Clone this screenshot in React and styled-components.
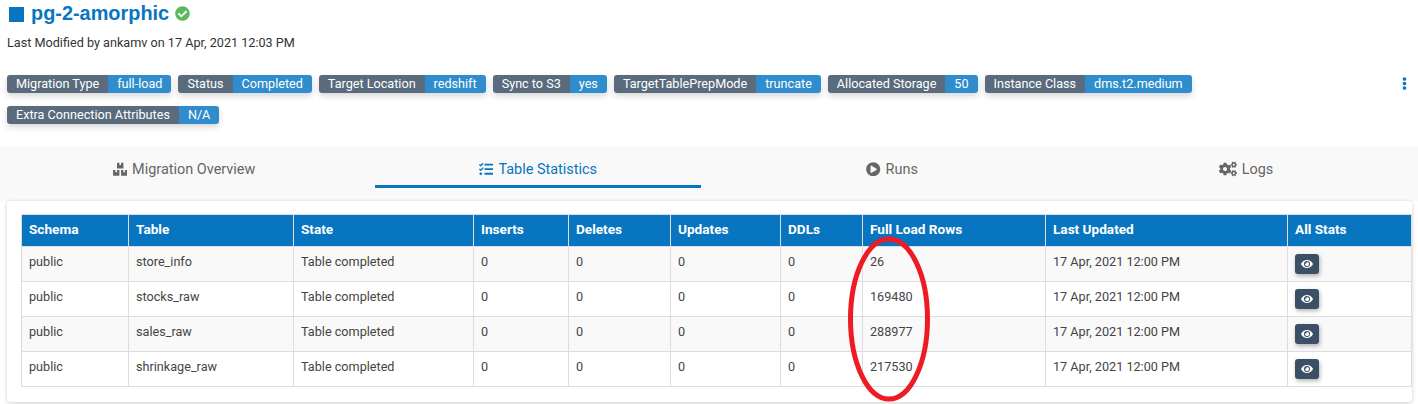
import React from 'react'
import styled, { createGlobalStyle } from 'styled-components'
import { FaBoxes, FaCheckCircle, FaCogs, FaEllipsisV, FaEye, FaPlayCircle, FaTasks } from 'react-icons/fa'

const GlobalStyle = createGlobalStyle`
  html, body {
    margin: 0;
    background: #fff;
    font-family: Roboto, "Liberation Sans", sans-serif;
  }
`

const Page = styled.div`
  position: relative;
  width: 1418px;
  height: 404px;
  overflow: hidden;
  background: #fff;
`

const Header = styled.header`
  height: 146px;
  padding: 0 7px;
  box-sizing: border-box;
`

const TitleRow = styled.div`
  display: flex;
  align-items: center;
  height: 27px;
  color: #0875c1;
`

const TitleMark = styled.span`
  width: 15px;
  height: 15px;
  margin: 1px 0 0 2px;
  background: #0875c1;
`

const Title = styled.h1`
  margin: 0 6px 0 7px;
  font: bold 19.9px/27px "Liberation Sans", Arial, sans-serif;
`

const Modified = styled.p`
  margin: 8px 0 0;
  height: 16px;
  font-size: 12.65px;
  line-height: 16px;
  color: #333;
`

const BadgeWrap = styled.div`
  position: relative;
  display: flex;
  flex-wrap: wrap;
  gap: 13px 7px;
  margin-top: 24px;
  padding-right: 60px;
`

const Badge = styled.span`
  display: inline-flex;
  height: 18px;
  border-radius: 3px;
  overflow: hidden;
  font-size: 12.64px;
  line-height: 18px;
  color: #fff;
  box-shadow: 0 3px 6px rgba(0, 0, 0, 0.16);
`

const BadgeKey = styled.span`
  padding: 0 9px;
  background: #5a6b7d;
`

const BadgeValue = styled.span`
  padding: 0 9px;
  background: #2f8ccd;
`

const Kebab = styled.span`
  position: absolute;
  top: 2px;
  right: 0;
  color: #0875c1;
  font-size: 13px;
`

const Tabs = styled.nav`
  display: flex;
  gap: 28px;
  height: 55px;
  padding-left: 21px;
  background: #f9f9f9;
`

const Tab = styled.div`
  display: flex;
  align-items: center;
  justify-content: center;
  gap: 5px;
  width: 326px;
  height: 42px;
  box-sizing: border-box;
  padding-top: 7px;
  font-size: 14.45px;
  color: ${p => (p.$active ? '#0875c1' : '#666')};
  border-bottom: 3px solid ${p => (p.$active ? '#0875c1' : 'transparent')};
`

const Card = styled.section`
  margin: 0 6px 0 7px;
  height: 201px;
  padding: 14px 0 0 15px;
  box-sizing: border-box;
  border-radius: 4px;
  background: #fff;
  box-shadow: 0 1px 4px rgba(0, 0, 0, 0.2);
`

const Table = styled.table`
  width: 1391px;
  margin: -1px 0 0 -1px;
  table-layout: fixed;
  border-collapse: collapse;
  font-size: 12.65px;
`

const Th = styled.th`
  height: 32px;
  padding: 0 7px 4px;
  box-sizing: border-box;
  border: 1px solid #ddd;
  background: #0875c1;
  color: #fff;
  font-size: 13.6px;
  font-weight: 700;
  text-align: left;
`

const Row = styled.tr`
  background: ${p => (p.$odd ? '#f9f9f9' : '#fff')};
`

const Td = styled.td`
  height: 35px;
  padding: 0 7px 5px;
  box-sizing: border-box;
  border: 1px solid #ddd;
  color: #444;
`

const ViewButton = styled.button`
  display: flex;
  align-items: center;
  justify-content: center;
  width: 24px;
  height: 20px;
  margin: 5px 0 0;
  padding: 0;
  border: 0;
  border-radius: 3px;
  background: #3b4f66;
  color: #fff;
  font-size: 12px;
  box-shadow: 1px 2px 4px rgba(0, 0, 0, 0.3);
`

const Ring = styled.svg`
  position: absolute;
  left: 845px;
  top: 234px;
`

const badges = [
  ['Migration Type', 'full-load'],
  ['Status', 'Completed'],
  ['Target Location', 'redshift'],
  ['Sync to S3', 'yes'],
  ['TargetTablePrepMode', 'truncate'],
  ['Allocated Storage', '50'],
  ['Instance Class', 'dms.t2.medium'],
  ['Extra Connection Attributes', 'N/A'],
]

const columns = [
  ['Schema', 107],
  ['Table', 165],
  ['State', 180],
  ['Inserts', 95],
  ['Deletes', 102],
  ['Updates', 110],
  ['DDLs', 82],
  ['Full Load Rows', 183],
  ['Last Updated', 242],
  ['All Stats', 124],
]

const rows = [
  ['store_info', '26'],
  ['stocks_raw', '169480'],
  ['sales_raw', '288977'],
  ['shrinkage_raw', '217530'],
]

const App = () => {
  return (
    <Page>
      <GlobalStyle />
      <Header>
        <TitleRow>
          <TitleMark />
          <Title>pg-2-amorphic</Title>
          <FaCheckCircle size={15} color="#5cb85c" />
        </TitleRow>
        <Modified>Last Modified by ankamv on 17 Apr, 2021 12:03 PM</Modified>
        <BadgeWrap>
          {badges.map(([k, v]) => (
            <Badge key={k}>
              <BadgeKey>{k}</BadgeKey>
              <BadgeValue>{v}</BadgeValue>
            </Badge>
          ))}
          <Kebab>
            <FaEllipsisV />
          </Kebab>
        </BadgeWrap>
      </Header>
      <Tabs>
        <Tab><FaBoxes /> Migration Overview</Tab>
        <Tab $active><FaTasks /> Table Statistics</Tab>
        <Tab><FaPlayCircle /> Runs</Tab>
        <Tab><FaCogs size={18} /> Logs</Tab>
      </Tabs>
      <Card>
        <Table>
          <colgroup>
            {columns.map(([name, w]) => (
              <col key={name} width={w} />
            ))}
          </colgroup>
          <thead>
            <tr>
              {columns.map(([name]) => (
                <Th key={name}>{name}</Th>
              ))}
            </tr>
          </thead>
          <tbody>
            {rows.map(([table, count], i) => (
              <Row key={table} $odd={i % 2 === 0}>
                <Td>public</Td>
                <Td>{table}</Td>
                <Td>Table completed</Td>
                <Td>0</Td>
                <Td>0</Td>
                <Td>0</Td>
                <Td>0</Td>
                <Td>{count}</Td>
                <Td>17 Apr, 2021 12:00 PM</Td>
                <Td>
                  <ViewButton aria-label="View stats">
                    <FaEye />
                  </ViewButton>
                </Td>
              </Row>
            ))}
          </tbody>
        </Table>
      </Card>
      <Ring width="90" height="170" viewBox="0 0 90 170">
        <ellipse cx="44" cy="85" rx="38.5" ry="80" fill="none" stroke="#ed1c24" strokeWidth="5" />
      </Ring>
    </Page>
  )
}

export default App
